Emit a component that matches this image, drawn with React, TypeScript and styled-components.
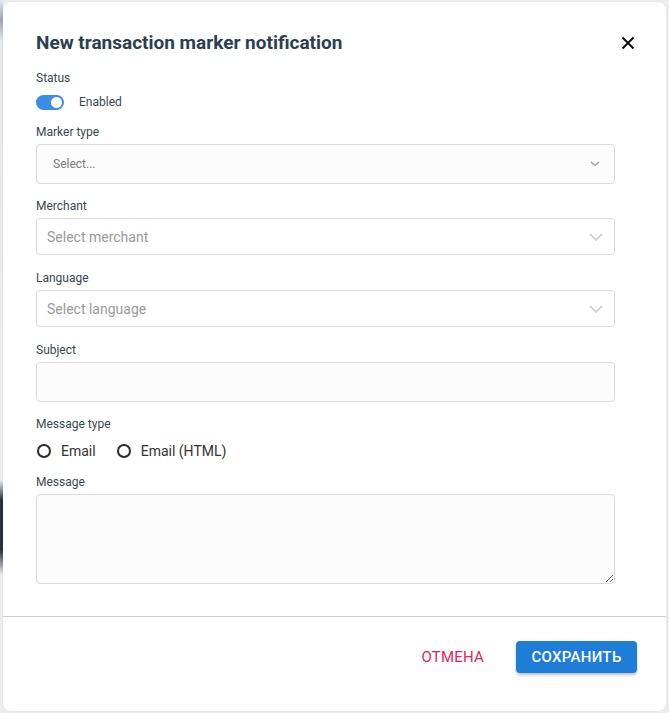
import React, { FunctionComponent } from 'react'
import styled, { createGlobalStyle } from 'styled-components'

const GlobalStyle = createGlobalStyle`
    * { box-sizing: border-box; }
    html, body {
        margin: 0;
        padding: 0;
        background: #ececec;
        font-family: Roboto, 'Liberation Sans', sans-serif;
    }
`

const Backdrop = styled.div`
    width: 669px;
    height: 713px;
    padding: 2px 3px 2px 3px;
    background-color: #eeeeee;
    background-image: linear-gradient(
        to bottom,
        #e6e9ec 0px,
        #9aa6b0 20px,
        #e6e9ec 40px,
        #eeeeee 480px,
        #243444 500px,
        #243444 550px,
        #eeeeee 575px
    );
    background-size: 3px 100%;
    background-repeat: no-repeat;
`

const Modal = styled.div`
    width: 663px;
    height: 709px;
    background: #ffffff;
    border-radius: 8px;
    display: flex;
    flex-direction: column;
    box-shadow: 0 0 3px rgba(0, 0, 0, 0.08);
`

const Header = styled.div`
    display: flex;
    align-items: center;
    justify-content: space-between;
    padding: 30px 28px 0 33px;
    height: 52px;
`

const Title = styled.h2`
    margin: 0;
    font-size: 19px;
    line-height: 22px;
    font-weight: 700;
    color: #2c3e50;
`

const CloseButton = styled.button`
    border: none;
    background: none;
    padding: 0;
    width: 20px;
    height: 20px;
    display: flex;
    align-items: center;
    justify-content: center;
    cursor: pointer;
`

const Body = styled.div`
    display: flex;
    flex-direction: column;
    padding: 16px 51px 0 33px;
`

const Field = styled.div<{ $gap?: number }>`
    display: flex;
    flex-direction: column;
    margin-bottom: ${(p) => (p.$gap ?? 14)}px;
`

const Label = styled.label`
    font-size: 12px;
    line-height: 16px;
    color: #37474f;
    margin-bottom: 4px;
`

const ToggleRow = styled.div`
    display: flex;
    align-items: center;
    height: 24px;
`

const Track = styled.span`
    position: relative;
    width: 28px;
    height: 15px;
    border-radius: 8px;
    background: #3a8ee6;
    margin-right: 15px;
`

const Knob = styled.span`
    position: absolute;
    top: 2px;
    right: 2px;
    width: 11px;
    height: 11px;
    border-radius: 50%;
    background: #ffffff;
`

const ToggleText = styled.span`
    font-size: 12px;
    color: #37474f;
`

const SelectBox = styled.div<{ $filled?: boolean }>`
    height: ${(p) => (p.$filled ? 40 : 37)}px;
    border: 1px solid #d9d9d9;
    border-radius: 4px;
    background: ${(p) => (p.$filled ? '#fcfcfc' : '#ffffff')};
    display: flex;
    align-items: center;
    justify-content: space-between;
    padding: ${(p) => (p.$filled ? '0 14px 0 16px' : '0 11px 0 10px')};
`

const Placeholder = styled.span<{ $small?: boolean }>`
    font-size: ${(p) => (p.$small ? 12 : 14)}px;
    color: ${(p) => (p.$small ? '#7a7a7a' : '#9a9a9a')};
`

const TextInput = styled.div`
    height: 40px;
    border: 1px solid #d9d9d9;
    border-radius: 4px;
    background: #fcfcfc;
`

const RadioRow = styled.div`
    display: flex;
    align-items: center;
    height: 24px;
    margin: 3px 0 11px 0;
`

const RadioOption = styled.label`
    display: flex;
    align-items: center;
    margin-right: 20px;
    font-size: 14px;
    color: #333333;
`

const RadioCircle = styled.span`
    width: 14px;
    height: 14px;
    border: 2px solid #2b2b2b;
    border-radius: 50%;
    margin: 0 10px 0 1px;
`

const TextArea = styled.textarea`
    height: 90px;
    border: 1px solid #d9d9d9;
    border-radius: 4px;
    background: #fcfcfc;
    resize: vertical;
    font-family: inherit;
    outline: none;
`

const Divider = styled.hr`
    margin: 32px 0 0 0;
    border: none;
    border-top: 1px solid #d0d0d0;
`

const Footer = styled.div`
    display: flex;
    justify-content: flex-end;
    align-items: center;
    padding: 23px 29px 0 0;
    gap: 16px;
`

const TextButton = styled.button`
    border: none;
    background: none;
    color: #e3245f;
    font-family: inherit;
    font-size: 15px;
    letter-spacing: 0.2px;
    text-transform: uppercase;
    padding: 8px 16px;
    cursor: pointer;
`

const PrimaryButton = styled.button`
    border: none;
    background: #1e7dd7;
    color: #ffffff;
    font-family: inherit;
    font-size: 15px;
    letter-spacing: 0.3px;
    font-weight: 500;
    text-transform: uppercase;
    height: 32px;
    width: 121px;
    border-radius: 4px;
    box-shadow: 0 2px 3px rgba(0, 0, 0, 0.25);
    cursor: pointer;
`

const Chevron: FunctionComponent<{ small?: boolean }> = ({ small }) =>
    small ? (
        <svg width="10" height="6" viewBox="0 0 10 6">
            <path d="M1 1 L5 4.5 L9 1" fill="none" stroke="#999" strokeWidth="1.2" />
        </svg>
    ) : (
        <svg width="14" height="8" viewBox="0 0 14 8">
            <path d="M1 1 L7 7 L13 1" fill="none" stroke="#c8c8c8" strokeWidth="1.5" />
        </svg>
    )

const App: FunctionComponent = () => {
    return (
        <>
            <GlobalStyle />
            <Backdrop>
                <Modal>
                    <Header>
                        <Title>New transaction marker notification</Title>
                        <CloseButton>
                            <svg width="14" height="14" viewBox="0 0 14 14">
                                <path d="M1.5 1.5 L12.5 12.5 M12.5 1.5 L1.5 12.5" stroke="#111" strokeWidth="2" />
                            </svg>
                        </CloseButton>
                    </Header>
                    <Body>
                        <Field $gap={10}>
                            <Label>Status</Label>
                            <ToggleRow>
                                <Track>
                                    <Knob />
                                </Track>
                                <ToggleText>Enabled</ToggleText>
                            </ToggleRow>
                        </Field>
                        <Field>
                            <Label>Marker type</Label>
                            <SelectBox $filled>
                                <Placeholder $small>Select...</Placeholder>
                                <Chevron small />
                            </SelectBox>
                        </Field>
                        <Field $gap={15}>
                            <Label>Merchant</Label>
                            <SelectBox>
                                <Placeholder>Select merchant</Placeholder>
                                <Chevron />
                            </SelectBox>
                        </Field>
                        <Field $gap={15}>
                            <Label>Language</Label>
                            <SelectBox>
                                <Placeholder>Select language</Placeholder>
                                <Chevron />
                            </SelectBox>
                        </Field>
                        <Field>
                            <Label>Subject</Label>
                            <TextInput />
                        </Field>
                        <Field $gap={0}>
                            <Label>Message type</Label>
                            <RadioRow>
                                <RadioOption>
                                    <RadioCircle />
                                    Email
                                </RadioOption>
                                <RadioOption>
                                    <RadioCircle />
                                    Email (HTML)
                                </RadioOption>
                            </RadioRow>
                        </Field>
                        <Field $gap={0}>
                            <Label>Message</Label>
                            <TextArea />
                        </Field>
                    </Body>
                    <Divider />
                    <Footer>
                        <TextButton>Отмена</TextButton>
                        <PrimaryButton>Сохранить</PrimaryButton>
                    </Footer>
                </Modal>
            </Backdrop>
        </>
    )
}

export default App
